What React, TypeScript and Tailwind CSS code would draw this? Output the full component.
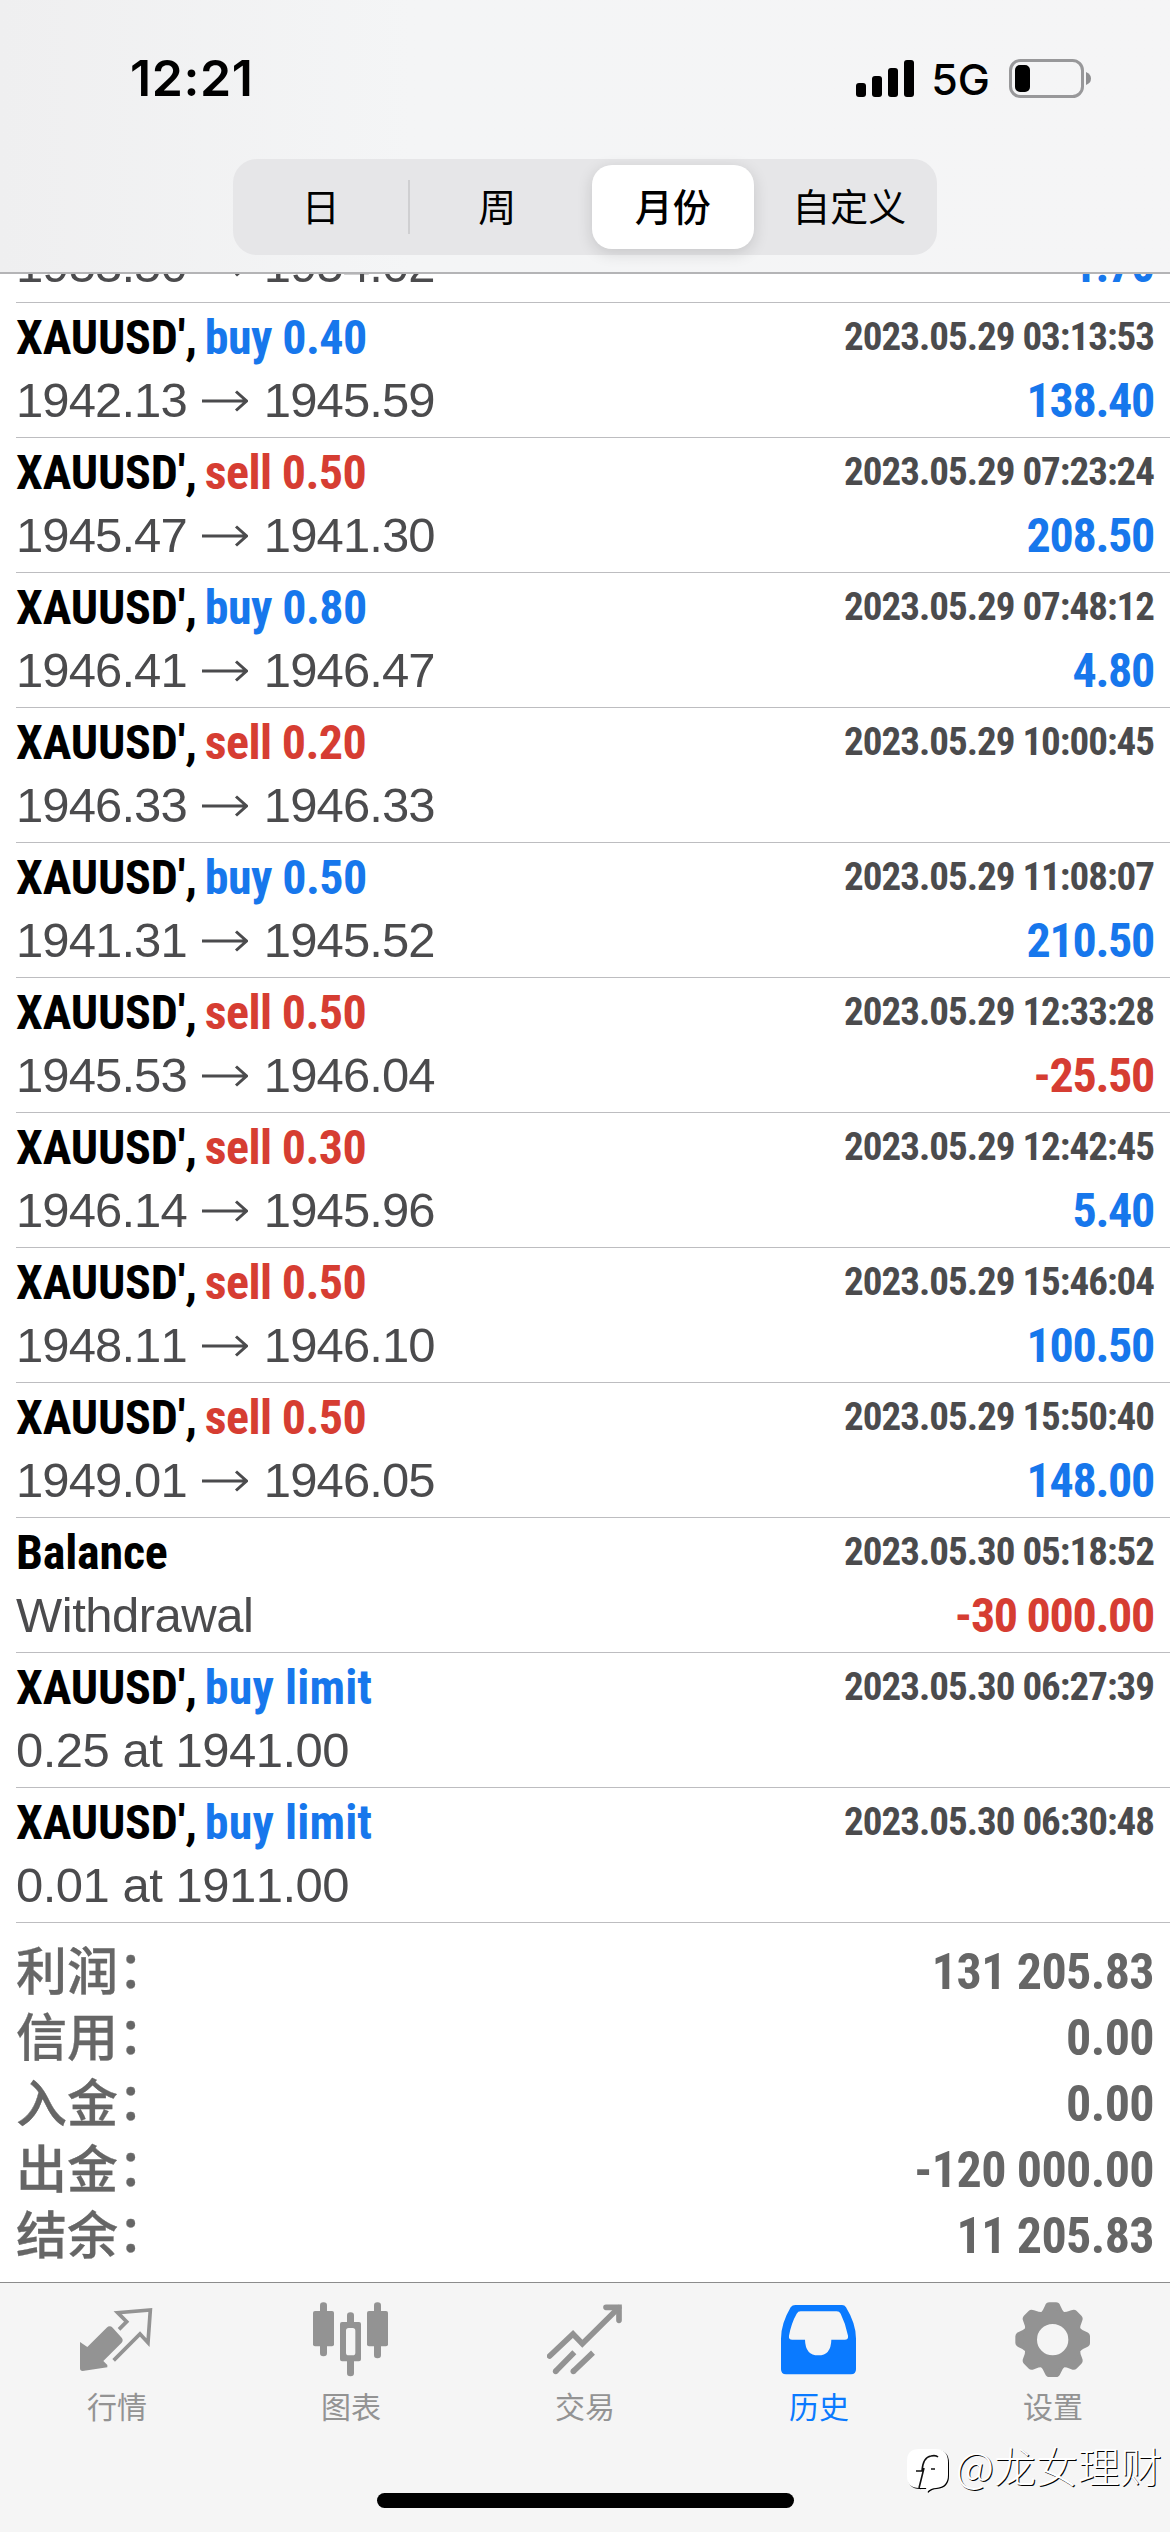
import type { ReactNode } from 'react';
import clsx from 'clsx';

interface Deal {
  symbol?: string;
  side?: string;
  tone?: 'buy' | 'sell';
  open: string;
  close?: string;
  time?: string;
  profit?: string;
}

const deals: Deal[] = [
  // scrolled under the header, only the price line is left
  { open: '1953.50', close: '1954.02', profit: '1.70' },
  { symbol: "XAUUSD',", side: 'buy 0.40', tone: 'buy', open: '1942.13', close: '1945.59', time: '2023.05.29 03:13:53', profit: '138.40' },
  { symbol: "XAUUSD',", side: 'sell 0.50', tone: 'sell', open: '1945.47', close: '1941.30', time: '2023.05.29 07:23:24', profit: '208.50' },
  { symbol: "XAUUSD',", side: 'buy 0.80', tone: 'buy', open: '1946.41', close: '1946.47', time: '2023.05.29 07:48:12', profit: '4.80' },
  { symbol: "XAUUSD',", side: 'sell 0.20', tone: 'sell', open: '1946.33', close: '1946.33', time: '2023.05.29 10:00:45' },
  { symbol: "XAUUSD',", side: 'buy 0.50', tone: 'buy', open: '1941.31', close: '1945.52', time: '2023.05.29 11:08:07', profit: '210.50' },
  { symbol: "XAUUSD',", side: 'sell 0.50', tone: 'sell', open: '1945.53', close: '1946.04', time: '2023.05.29 12:33:28', profit: '-25.50' },
  { symbol: "XAUUSD',", side: 'sell 0.30', tone: 'sell', open: '1946.14', close: '1945.96', time: '2023.05.29 12:42:45', profit: '5.40' },
  { symbol: "XAUUSD',", side: 'sell 0.50', tone: 'sell', open: '1948.11', close: '1946.10', time: '2023.05.29 15:46:04', profit: '100.50' },
  { symbol: "XAUUSD',", side: 'sell 0.50', tone: 'sell', open: '1949.01', close: '1946.05', time: '2023.05.29 15:50:40', profit: '148.00' },
  { symbol: 'Balance', open: 'Withdrawal', time: '2023.05.30 05:18:52', profit: '-30 000.00' },
  { symbol: "XAUUSD',", side: 'buy limit', tone: 'buy', open: '0.25 at 1941.00', time: '2023.05.30 06:27:39' },
  { symbol: "XAUUSD',", side: 'buy limit', tone: 'buy', open: '0.01 at 1911.00', time: '2023.05.30 06:30:48' },
];

const totals = [
  { label: '利润', value: '131 205.83' },
  { label: '信用', value: '0.00' },
  { label: '入金', value: '0.00' },
  { label: '出金', value: '-120 000.00' },
  { label: '结余', value: '11 205.83' },
];

const gearTeeth = [0, 45, 90, 135, 180, 225, 270, 315];

const PriceArrow = () => (
  <svg className="ml-[15px] mr-[16px] h-[24px] w-[46px]" viewBox="0 0 46 24" fill="none" stroke="currentColor" strokeWidth="3">
    <path d="M0 12H44M34 2.5L44.5 12L34 21.5" />
  </svg>
);

const DealRow = ({ deal }: { deal: Deal }) => (
  <div className="ml-4 h-[135px] shrink-0 border-b border-[#bdbdc0] pr-4">
    <div className="flex h-[67px] items-end justify-between font-['Roboto_Condensed'] font-bold">
      <div className="flex gap-2 text-[48px] leading-[64px]">
        <span className="tracking-[-0.2px] text-black">{deal.symbol}</span>
        {deal.side && (
          <span
            className={clsx(
              deal.tone === 'buy' ? 'text-[#1777ec]' : 'text-[#d63d32]',
              deal.side.endsWith('limit') ? 'tracking-[0.1px]' : 'tracking-[-0.6px]',
            )}
          >
            {deal.side}
          </span>
        )}
      </div>
      <span className="text-[39px] leading-[66px] tracking-[-1px] text-[#4b4b4d]">{deal.time}</span>
    </div>
    <div className="flex h-[62px] items-center justify-between">
      <div
        className={clsx(
          "flex items-center font-['Liberation_Sans'] text-[49px] text-[#4b4b4d] [font-kerning:none]",
          deal.close ? 'tracking-[-0.9px]' : 'tracking-[-0.5px]',
        )}
      >
        <span>{deal.open}</span>
        {deal.close && (
          <>
            <PriceArrow />
            <span>{deal.close}</span>
          </>
        )}
      </div>
      <span
        className={clsx(
          "font-['Roboto_Condensed'] text-[48px] font-bold tracking-[-1.3px]",
          deal.profit?.startsWith('-') ? 'text-[#d63d32]' : 'text-[#1777ec]',
        )}
      >
        {deal.profit}
      </span>
    </div>
  </div>
);

const StatusBar = () => (
  <div className="flex h-[159px] items-start justify-between pl-[130px] pr-[79px] pt-[48px]">
    <span className="font-['Inter'] text-[50px] font-semibold leading-[60px] tracking-[0.6px] text-black">12:21</span>
    <div className="flex h-[60px] items-center">
      <svg className="h-[37px] w-[58px]" viewBox="0 0 58 37">
        <rect x="0" y="23" width="10" height="14" rx="3" />
        <rect x="16" y="16" width="10" height="21" rx="3" />
        <rect x="32" y="8" width="10" height="29" rx="3" />
        <rect x="48" y="0" width="10" height="37" rx="3" />
      </svg>
      <span className="ml-[17px] mr-[19px] pt-[2px] font-['Inter'] text-[43px] font-medium">5G</span>
      <svg className="h-[39px] w-[82px]" viewBox="0 0 82 39">
        <rect x="1.5" y="1.5" width="72" height="36" rx="10" fill="none" stroke="#98989a" strokeWidth="3" />
        <rect x="6" y="6" width="15" height="27" rx="5" />
        <path d="M77 13q5 2 5 6.500t-5 6.500z" fill="#8f8f91" />
      </svg>
    </div>
  </div>
);

const SegmentedControl = () => (
  <div className="mx-auto flex h-[96px] w-[704px] items-center rounded-[24px] bg-[#e6e6e8] font-['Noto_Sans_CJK_SC'] text-[38px] text-black">
    <div className="w-[176px] pb-[5px] text-center">日</div>
    <div className="h-[54px] w-[2px] bg-[#cfcfd1]" />
    <div className="w-[174px] pb-[5px] text-center">周</div>
    <div className="mx-[8px] flex h-[84px] w-[162px] items-center justify-center rounded-[20px] bg-white pb-[5px] font-medium shadow-[0_4px_16px_rgba(0,0,0,0.14)]">
      月份
    </div>
    <div className="w-[176px] pb-[5px] text-center">自定义</div>
  </div>
);

const Tab = ({ label, viewBox, active, children }: { label: string; viewBox: string; active?: boolean; children: ReactNode }) => (
  <div className={clsx('flex flex-1 flex-col items-center', active ? 'text-[#0a7aff]' : 'text-[#939393]')}>
    <svg className="h-[76px] w-[76px]" viewBox={viewBox} fill="currentColor">
      {children}
    </svg>
    <span className="mt-[10px] font-['Noto_Sans_CJK_SC'] text-[30px] leading-[36px]">{label}</span>
  </div>
);

const TabBar = () => (
  <div className="flex h-[167px] pt-[18px]">
    <Tab label="行情" viewBox="237 92 228 228">
      <path d="M240 215L262 230L320 172Q329 164 338 172L365 202Q371 210 365 217L310 272L322 284V291L248 302Q240 302 240 294Z" />
      <path d="M357 177L380 154L353 127L451 119L444 217L420 191L341 270" fill="none" stroke="currentColor" strokeWidth="11" />
    </Tab>
    <Tab label="图表" viewBox="939 92 228 228">
      <rect x="960" y="96" width="21" height="162" rx="10" />
      <rect x="939" y="122" width="63" height="106" rx="6" />
      <rect x="1122" y="96" width="21" height="168" rx="10" />
      <rect x="1101" y="122" width="63" height="106" rx="6" />
      <rect x="1041" y="126" width="21" height="40" rx="10" />
      <rect x="1041" y="262" width="21" height="56" rx="10" />
      <path
        fillRule="evenodd"
        d="M1026 155H1077Q1083 155 1083 161V267Q1083 273 1077 273H1026Q1020 273 1020 267V161Q1020 155 1026 155ZM1046 173Q1038 173 1038 181V247Q1038 255 1046 255H1058Q1066 255 1066 247V181Q1066 173 1058 173Z"
      />
    </Tab>
    <Tab label="交易" viewBox="261 92 228 228">
      <g fill="none" stroke="currentColor" strokeWidth="17" strokeLinecap="round">
        <path d="M269 257L339 191L367 220L476 112" />
        <path d="M438 111H477V150" />
      </g>
      <circle cx="287" cy="303" r="8.5" />
      <circle cx="340" cy="303" r="8.5" />
      <path d="M287 303L343 246M340 303L399 247" fill="none" stroke="currentColor" strokeWidth="17" />
    </Tab>
    <Tab label="历史" viewBox="963 92 228 228" active>
      <path
        fillRule="evenodd"
        d="M1006 104H1146Q1154 104 1158 111Q1188 160 1188 205V297Q1188 312 1173 312H978Q963 312 963 297V205Q963 160 992 111Q997 104 1006 104ZM1022 123Q1014 123 1010 130Q994 158 987 196Q985 208 997 208H1035Q1036 255 1075 255Q1113 255 1114 208H1154Q1166 208 1164 196Q1157 160 1142 130Q1138 123 1130 123Z"
      />
    </Tab>
    <Tab label="设置" viewBox="555 92 228 228">
      {gearTeeth.map((angle) => (
        <path
          key={angle}
          transform={`rotate(${angle} 668 208)`}
          d="M630 130Q640 120 645 106Q649 96 658 96H678Q687 96 691 106Q696 120 706 130Z"
        />
      ))}
      <circle cx="668" cy="208" r="68" fill="none" stroke="currentColor" strokeWidth="42" />
    </Tab>
  </div>
);

const Watermark = () => (
  <div className="absolute right-[8px] top-[2434px] flex items-center gap-[6px]">
    <svg className="mt-[14px] h-[48px] w-[44px] drop-shadow-[1px_1px_0_#000]" viewBox="0 0 44 48" fill="none">
      <path
        d="M13 1H29Q42 1 42 14V27Q42 39 30 40Q25 40 21 44L20 40H13Q1 40 1 28V13Q1 1 13 1Z"
        fill="#fff"
      />
      <path d="M10 23H16Q17 9 25 8Q30 7 32 9M18 20L13 40M25 21H29" stroke="#111" strokeWidth="1.6" />
    </svg>
    <span className="whitespace-nowrap font-['Noto_Sans_CJK_SC'] text-[42px] font-light leading-[48px] text-white [text-shadow:1px_1px_0_#000]">
      @龙女理财
    </span>
  </div>
);

const App = () => (
  <div className="relative flex h-[2532px] w-[1170px] flex-col overflow-hidden bg-white font-['Liberation_Sans',sans-serif]">
    <header className="h-[274px] shrink-0 border-b-2 border-[#b4b4b6] bg-gradient-to-r from-[#efeff0] via-[#f4f5f6] via-35% to-[#f5f5f6]">
      <StatusBar />
      <SegmentedControl />
    </header>
    <main className="flex h-[1649px] shrink-0 flex-col justify-end overflow-hidden">
      {deals.map((deal, i) => (
        <DealRow key={i} deal={deal} />
      ))}
    </main>
    <section className="flex h-[359px] shrink-0 flex-col px-4 pt-[16px] text-[#666666]">
      {totals.map((total) => (
        <div key={total.label} className="flex h-[66px] items-center justify-between">
          <span className="flex pb-[7px] font-['Noto_Sans_CJK_SC'] text-[51px] font-medium leading-[59px] [-webkit-text-stroke:0.3px_#666666]">
            {total.label}
            <span className="-mt-[2px]">：</span>
          </span>
          <span className="font-['Roboto_Condensed'] text-[50px] font-bold leading-[66px] tracking-[-0.6px]">{total.value}</span>
        </div>
      ))}
    </section>
    <footer className="flex-1 border-t border-[#8c8c8c] bg-[#f5f5f5]">
      <TabBar />
      <div className="mx-auto mt-[43px] h-[15px] w-[417px] rounded-full bg-black" />
    </footer>
    <Watermark />
  </div>
);

export default App;
